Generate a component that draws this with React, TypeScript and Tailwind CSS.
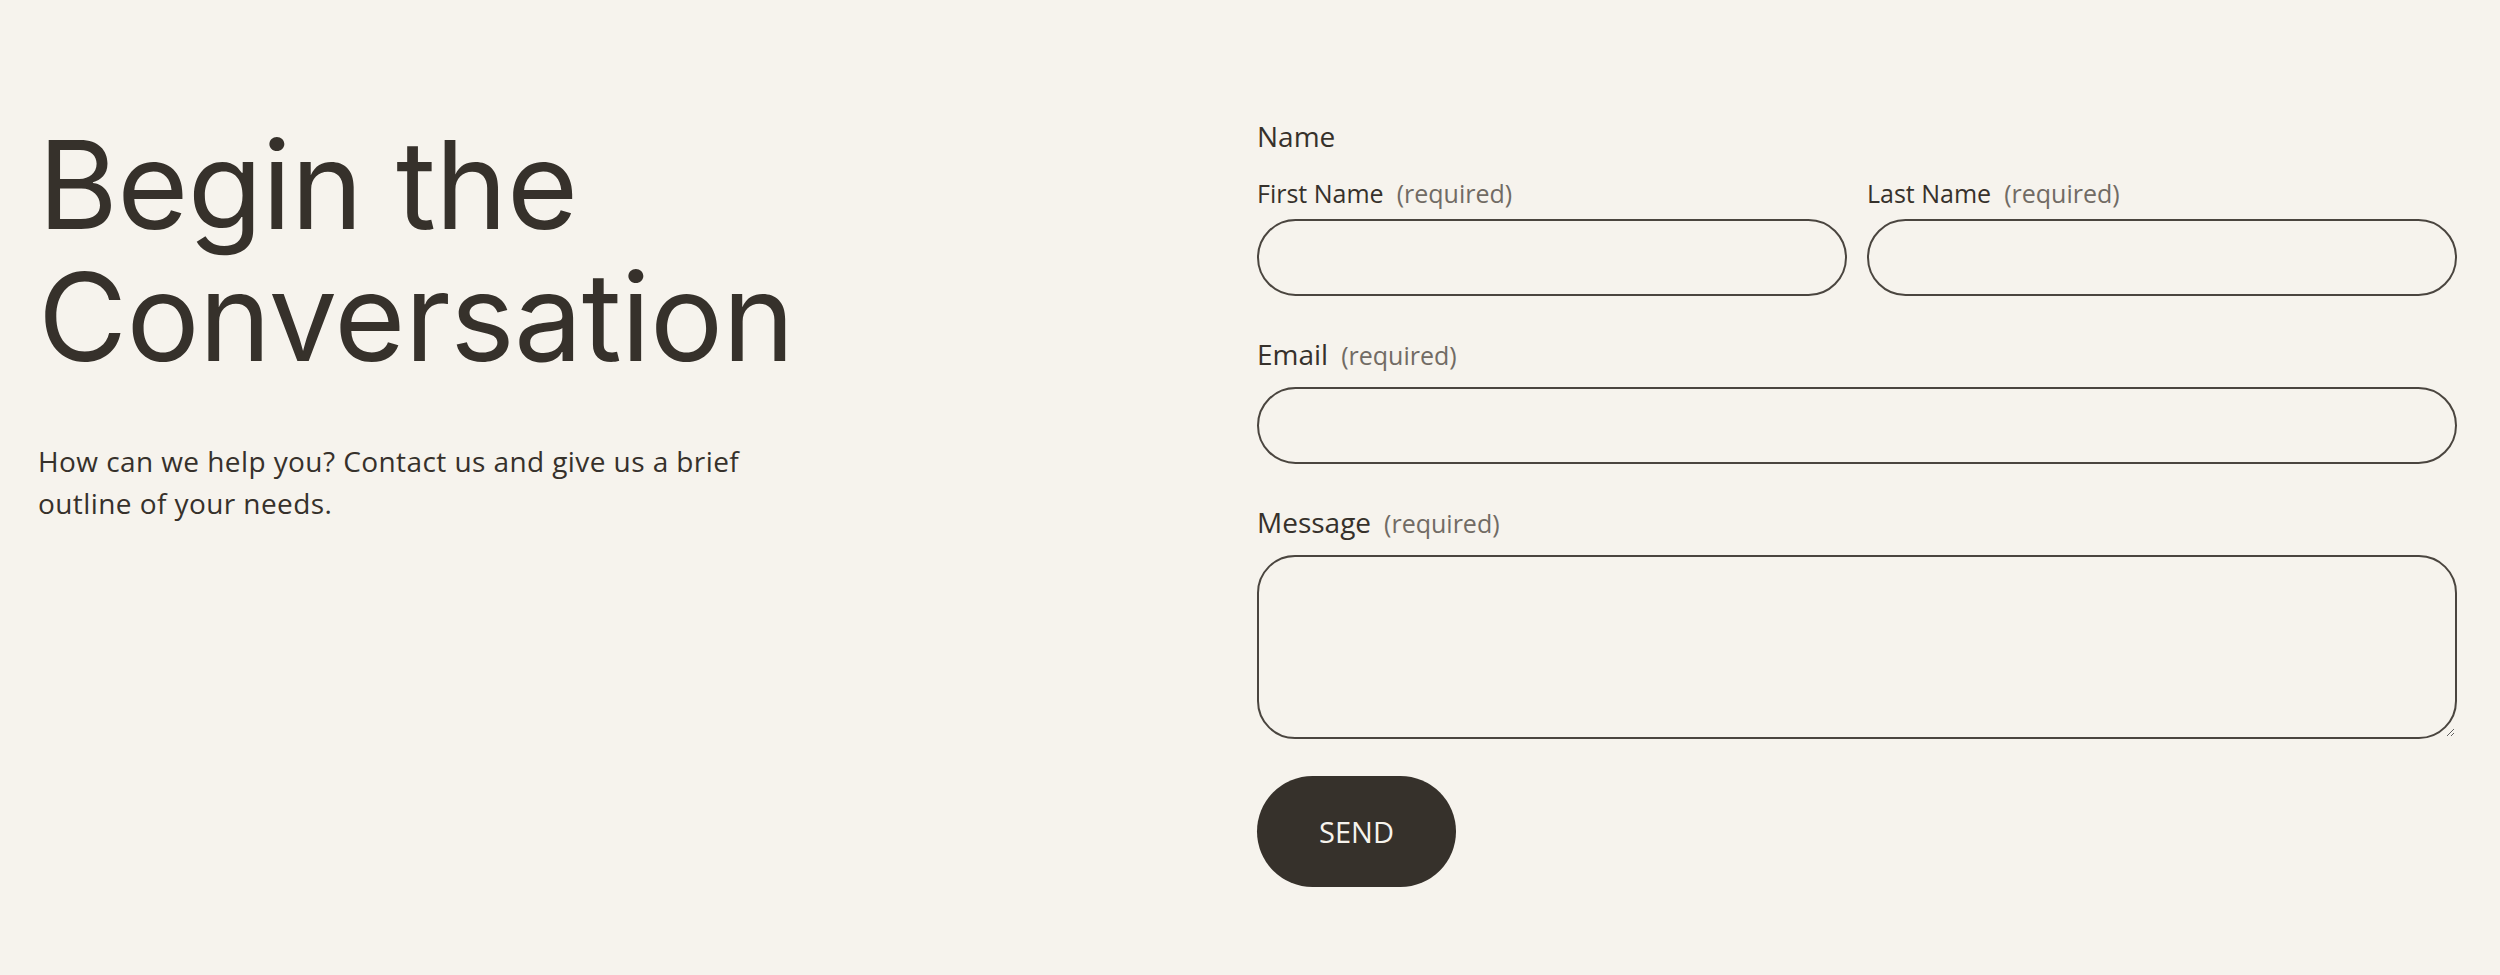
import React from 'react';

const sans = { fontFamily: '"Open Sans", Lato, sans-serif' };

const Field = ({
  label,
  big = false,
  children,
}: {
  label: string;
  big?: boolean;
  children: React.ReactNode;
}) => (
  <label className="flex flex-col">
    <span
      className={
        big
          ? 'text-[28px] leading-[34px] text-[#36312b] mb-[15px]'
          : 'text-[25px] leading-[30px] text-[#36312b] mb-[11px]'
      }
    >
      {label}
      <span className="text-[25px] text-[#716b64] ml-[13px]">(required)</span>
    </span>
    {children}
  </label>
);

const inputCls =
  'w-full h-[77px] rounded-full border-2 border-[#4a453f] bg-transparent px-8 text-[25px] text-[#36312b] outline-none';

const App = () => {
  return (
    <div className="min-h-screen bg-[#f6f3ed] text-[#36312b]" style={sans}>
      <div className="flex justify-between pl-[38px] pr-[43px] pt-[119px] pb-[88px]">
        {/* Intro copy */}
        <div className="w-[800px]">
          <h1
            className="text-[122px] leading-[132px] tracking-[-0.005em] font-normal text-[#36312b]"
            style={{ fontFamily: 'Inter, sans-serif' }}
          >
            Begin the
            <br />
            Conversation
          </h1>
          <p className="mt-[57px] max-w-[740px] text-[28px] leading-[42px] tracking-[0.015em] text-[#36312b]">
            How can we help you? Contact us and give us a brief outline of your needs.
          </p>
        </div>

        {/* Contact form */}
        <form className="w-[1200px] flex flex-col" onSubmit={(e) => e.preventDefault()}>
          <fieldset>
            <legend className="text-[28px] leading-[34px] text-[#36312b]">Name</legend>
            <div className="grid grid-cols-2 gap-[20px] mt-[25px]">
              <Field label="First Name">
                <input type="text" className={inputCls} />
              </Field>
              <Field label="Last Name">
                <input type="text" className={inputCls} />
              </Field>
            </div>
          </fieldset>

          <div className="mt-[41px]">
            <Field label="Email" big>
              <input type="email" className={inputCls} />
            </Field>
          </div>

          <div className="mt-[41px]">
            <Field label="Message" big>
              <textarea className="w-full h-[184px] rounded-[38px] border-2 border-[#4a453f] bg-transparent px-8 py-6 text-[25px] text-[#36312b] outline-none block" />
            </Field>
          </div>

          <div className="mt-[37px]">
            <button
              type="submit"
              className="h-[111px] w-[199px] rounded-full bg-[#36312b] text-[#f6f3ed] text-[29px]"
            >
              SEND
            </button>
          </div>
        </form>
      </div>
    </div>
  );
};

export default App;
